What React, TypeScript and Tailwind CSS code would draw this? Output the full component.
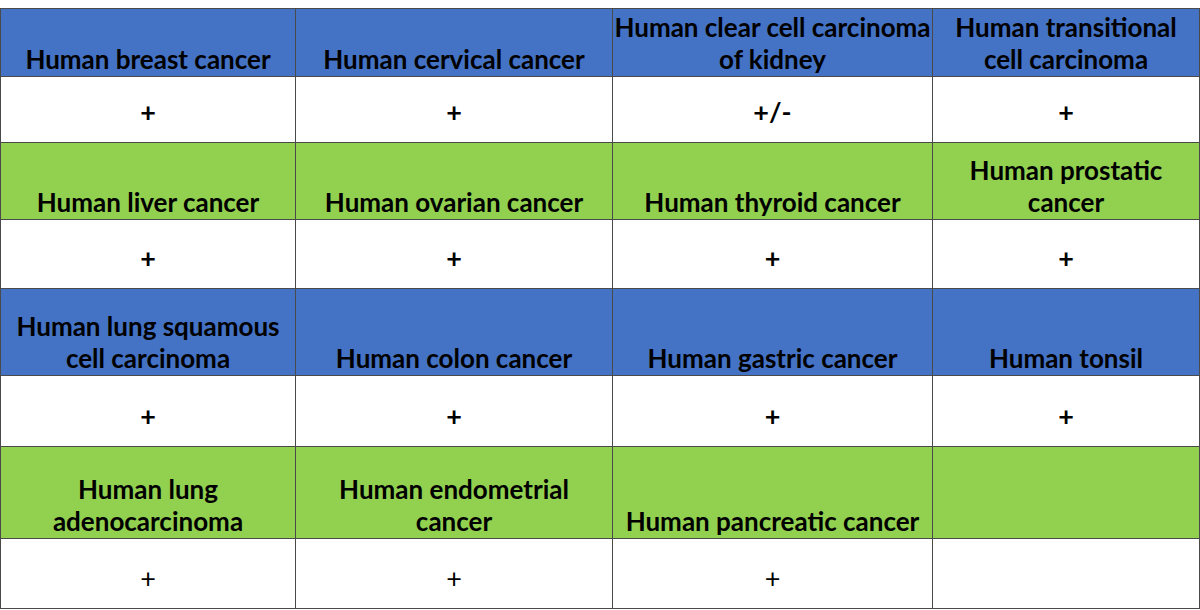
import React from 'react';

type Row = {
  kind: 'blue' | 'green';
  labels: string[][];
  values: string[];
  h: string;
  vh: string;
  light?: boolean;
};

const rows: Row[] = [
  {
    kind: 'blue',
    h: 'h-[68px]',
    vh: 'h-[66px]',
    labels: [
      ['Human breast cancer'],
      ['Human cervical cancer'],
      ['Human clear cell carcinoma', 'of kidney'],
      ['Human transitional', 'cell carcinoma'],
    ],
    values: ['+', '+', '+/-', '+'],
  },
  {
    kind: 'green',
    h: 'h-[77px]',
    vh: 'h-[69px]',
    labels: [
      ['Human liver cancer'],
      ['Human ovarian cancer'],
      ['Human thyroid cancer'],
      ['Human prostatic', 'cancer'],
    ],
    values: ['+', '+', '+', '+'],
  },
  {
    kind: 'blue',
    h: 'h-[87px]',
    vh: 'h-[71px]',
    labels: [
      ['Human lung squamous', 'cell carcinoma'],
      ['Human colon cancer'],
      ['Human gastric cancer'],
      ['Human tonsil'],
    ],
    values: ['+', '+', '+', '+'],
  },
  {
    kind: 'green',
    h: 'h-[92px]',
    vh: 'h-[70px]',
    light: true,
    labels: [
      ['Human lung', 'adenocarcinoma'],
      ['Human endometrial', 'cancer'],
      ['Human pancreatic cancer'],
      [],
    ],
    values: ['+', '+', '+', ''],
  },
];

const App: React.FC = () => {
  return (
    <div className="w-[1200px] h-[610px] bg-white pt-[8px] font-['Lato','Noto_Sans',sans-serif] text-black">
      <table className="w-[1199px] table-fixed border-collapse">
        <colgroup>
          <col className="w-[295px]" />
          <col className="w-[317px]" />
          <col className="w-[320px]" />
          <col className="w-[267px]" />
        </colgroup>
        <tbody>
          {rows.map((row, i) => (
            <React.Fragment key={i}>
              <tr className={row.h}>
                {row.labels.map((lines, j) => (
                  <td
                    key={j}
                    className={`border border-[#4a4a4a] align-bottom text-center p-0 pb-[1px] text-[26px] font-bold leading-[32px] ${
                      row.kind === 'blue' ? 'bg-[#4472c4]' : 'bg-[#92d050]'
                    }`}
                  >
                    {lines.map((l, k) => (
                      <div key={k} className="whitespace-nowrap">{l}</div>
                    ))}
                  </td>
                ))}
              </tr>
              <tr className={row.vh}>
                {row.values.map((v, j) => (
                  <td
                    key={j}
                    className={`border border-[#4a4a4a] bg-white align-bottom text-center p-0 pb-[14px] text-[27px] leading-[32px] ${
                      row.light ? 'font-normal' : 'font-bold'
                    }`}
                  >
                    {v}
                  </td>
                ))}
              </tr>
            </React.Fragment>
          ))}
        </tbody>
      </table>
    </div>
  );
};

export default App;
